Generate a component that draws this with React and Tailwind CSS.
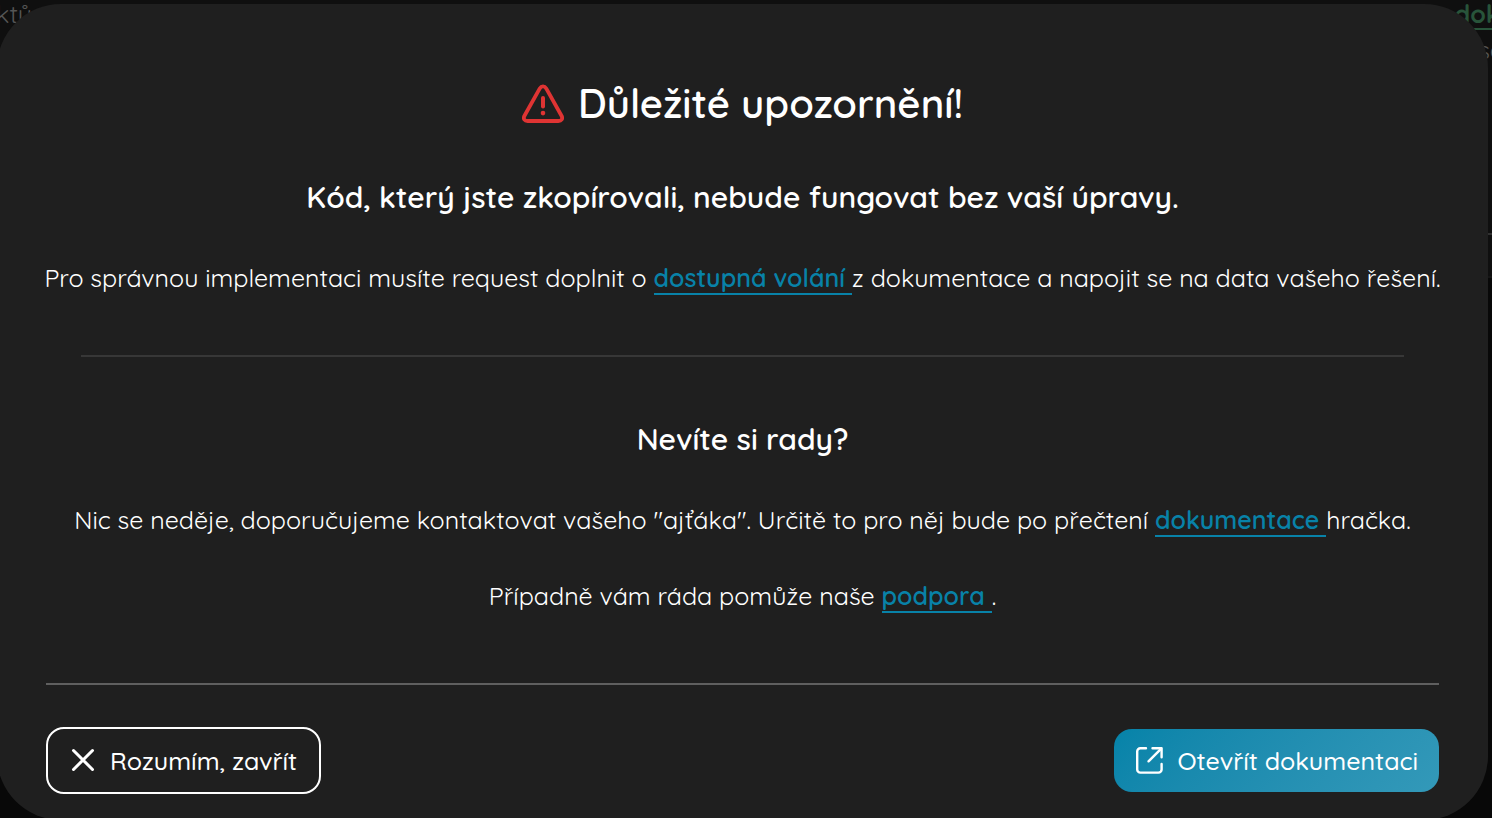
import { useState } from 'react';

export default function App() {
  const [open, setOpen] = useState(true);

  return (
    <div className="relative h-screen overflow-hidden bg-[#080808] font-['Quicksand','Lato',sans-serif] text-[25px] text-white">
      <Backdrop />

      {open && (
        <div
          role="dialog"
          aria-modal="true"
          aria-labelledby="notice-title"
          className="absolute top-1 -left-[3px] right-1 rounded-[64px] bg-[#1f1f1f] px-[49px] pt-[67px] pb-[26px]"
        >
          <div className="flex flex-col items-center text-center whitespace-nowrap">
            <h1 id="notice-title" className="flex items-center gap-[14px] text-[40px] leading-[64px] font-semibold">
              <WarningIcon />
              Důležité upozornění!
            </h1>
            <h2 className="mt-[42px] text-[30px] leading-[40px] font-semibold">
              Kód, který jste zkopírovali, nebude fungovat bez vaší úpravy.
            </h2>
            <p className="mt-[41px] leading-[40px]">
              Pro správnou implementaci musíte request doplnit o <TextLink>dostupná volání </TextLink>
              z dokumentace a napojit se na data vašeho řešení.
            </p>
          </div>

          <hr className="mx-[35px] mt-[57px] border-t-2 border-[#373737]" />

          <div className="mt-[62px] flex flex-col items-center text-center whitespace-nowrap">
            <h2 className="text-[30px] leading-[40px] font-semibold">Nevíte si rady?</h2>
            <p className="mt-[41px] leading-[40px]">
              Nic se neděje, doporučujeme kontaktovat vašeho "ajťáka". Určitě to pro něj bude po přečtení{' '}
              <TextLink>dokumentace </TextLink>hračka.
            </p>
            <p className="mt-[36px] leading-[40px]">
              Případně vám ráda pomůže naše <TextLink>podpora </TextLink>.
            </p>
          </div>

          <div className="mt-[67px] flex items-center justify-between border-t-2 border-[#5f5f5f] pt-[42px] leading-[36px] font-medium">
            <button
              type="button"
              onClick={() => setOpen(false)}
              className="flex h-[67px] items-center gap-[14px] rounded-[18px] border-2 border-white px-[22px]"
            >
              <CloseIcon />
              Rozumím, zavřít
            </button>
            <a
              href="#dokumentace"
              className="flex h-[63px] items-center gap-[14px] rounded-[18px] bg-linear-135 from-[#0583a9] to-[#3399b9] px-[21px]"
            >
              <OpenIcon />
              Otevřít dokumentaci
            </a>
          </div>
        </div>
      )}
    </div>
  );
}

function Backdrop() {
  return (
    <div aria-hidden="true" className="h-[278px] border-b-2 border-[#151515] bg-[#0f0f0f] text-[#555555]">
      <div className="-mx-2 flex h-[235px] items-start justify-between border-b-2 border-[#303030] leading-[28px]">
        <span className="ml-1">ktů</span>
        <div className="flex flex-col items-end">
          <span className="border-b-2 border-[#28543a] font-bold text-[#28543a]">dok</span>
          <span className="mt-[6px] -mr-1">se</span>
        </div>
      </div>
    </div>
  );
}

function TextLink({ children }) {
  return (
    <a
      href="#dokumentace"
      className="inline-block border-b-2 border-[#0882a8] leading-[30px] font-semibold whitespace-pre text-[#0882a8]"
    >
      {children}
    </a>
  );
}

function WarningIcon() {
  return (
    <svg className="h-[40px] w-[42px]" viewBox="0 0 42 40" fill="none" stroke="#df3433" strokeLinecap="round" strokeLinejoin="round" aria-hidden="true">
      <path strokeWidth="3.8" d="M17.8 5.400 L2.500 32.800 C0.800 35.800 2.600 38 5.600 38 H36.400 C39.400 38 41.200 35.800 39.500 32.800 L24.200 5.400 C22.600 2.800 19.400 2.800 17.800 5.400 Z" />
      <path strokeWidth="4" d="M21 15 V23.500" />
      <path strokeWidth="4.6" d="M21 30 V30.100" />
    </svg>
  );
}

function CloseIcon() {
  return (
    <svg className="size-[26px]" viewBox="0 0 26 26" fill="none" stroke="currentColor" strokeWidth="3" strokeLinecap="round" aria-hidden="true">
      <path d="M3.500 2.500 L22.500 21.500 M22.500 2.500 L3.500 21.500" />
    </svg>
  );
}

function OpenIcon() {
  return (
    <svg className="size-[28px]" viewBox="0 0 28 28" fill="none" stroke="currentColor" strokeWidth="2.4" strokeLinecap="round" strokeLinejoin="round" aria-hidden="true">
      <path d="M11 1.200 H5.500 A3.200 3.200 0 0 0 2.200 4.400 V22.400 A3.200 3.200 0 0 0 5.400 25.600 H23.400 A3.200 3.200 0 0 0 26.600 22.400 V17" />
      <path d="M17.500 1.200 H26.600 V10.200" />
      <path d="M26 1.800 L13.500 14.300" />
    </svg>
  );
}
